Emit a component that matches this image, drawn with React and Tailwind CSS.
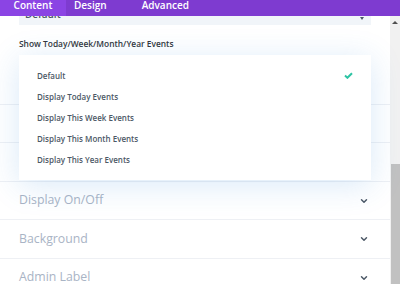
import { ChevronDown } from "lucide-react";

const OPTIONS = [
  "Default",
  "Display Today Events",
  "Display This Week Events",
  "Display This Month Events",
  "Display This Year Events",
];

const TOGGLES = [
  { label: "", h: "h-[38px]" },
  { label: "", h: "h-[39px]" },
  { label: "Display On/Off", h: "h-[38px]" },
  { label: "Background", h: "h-[39px]" },
  { label: "Admin Label", h: "h-[38px]" },
];

function Check() {
  return (
    <svg width="9" height="7" viewBox="0 0 9 7" className="mr-[18px]">
      <path d="M1 3.6 L3.4 5.8 L8 1.2" fill="none" stroke="#2ec4a4" strokeWidth="2" />
    </svg>
  );
}

export default function App() {
  return (
    <div
      className="w-[400px] h-[284px] overflow-hidden bg-white flex flex-col"
      style={{ fontFamily: '"Open Sans", sans-serif' }}
    >
      {/* Tabs */}
      <div className="h-4 shrink-0 bg-[#7e3bd0] flex items-start text-white text-[10px] font-semibold leading-[11px]">
        <div className="w-[66px] h-4 bg-[#8b44e4] text-center">Content</div>
        <div className="ml-[8px]">Design</div>
        <div className="ml-[35px]">Advanced</div>
      </div>

      <div className="flex flex-1 min-h-0">
        {/* Settings */}
        <div className="relative w-[390px] shrink-0">
          <div className="mx-[19px] h-[9px] bg-[#f1f5f9] overflow-hidden relative">
            <span className="block pl-[6px] -mt-[7px] text-[10px] leading-[10px] font-semibold text-[#4c5866]">
              Default
            </span>
            <span className="absolute right-[7px] top-[1px] w-0 h-0 border-x-[2px] border-x-transparent border-t-[3px] border-t-[#4c5866]" />
          </div>

          <div className="px-[19px] pt-[12px] h-[79px]">
            <div className="text-[8.4px] leading-[14px] font-semibold text-[#32373c]">
              Show Today/Week/Month/Year Events
            </div>
          </div>

          {TOGGLES.map((t, i) => (
            <div
              key={i}
              className={`${t.h} border-t border-[#eef0f4] px-[19px] flex items-center justify-between`}
            >
              <span className="text-[12.3px] font-medium text-[#a9b4c5]">{t.label}</span>
              <ChevronDown size={10} strokeWidth={3.5} className="text-[#4c5866] mr-[2px]" />
            </div>
          ))}

          {/* Open select dropdown */}
          <div className="absolute top-[39px] left-[19px] w-[352px] bg-white py-[10px] shadow-[0_5px_30px_rgba(43,135,218,0.18)]">
            {OPTIONS.map((o, i) => (
              <div
                key={o}
                className="h-[21px] pl-[18px] flex items-center justify-between text-[8px] font-semibold text-[#4c5866]"
              >
                <span>{o}</span>
                {i === 0 && <Check />}
              </div>
            ))}
          </div>
        </div>

        {/* Scrollbar */}
        <div className="w-[10px] bg-[#f1f1f1] flex flex-col">
          <div className="h-[148px] flex justify-center pt-[5px]">
            <span className="w-0 h-0 border-x-[3px] border-x-transparent border-b-[3px] border-b-[#505050]" />
          </div>
          <div className="flex-1 ml-[1px] bg-[#c1c1c1]" />
        </div>
      </div>
    </div>
  );
}
